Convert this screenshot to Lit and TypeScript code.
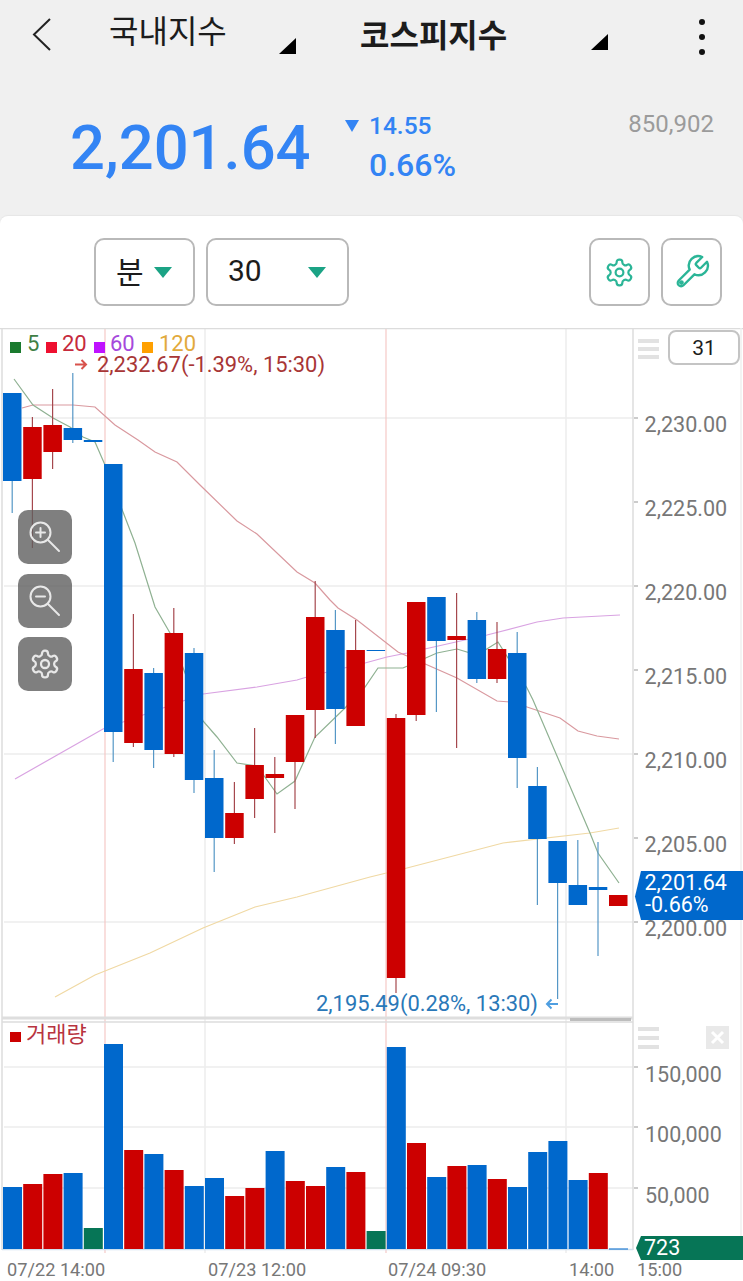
import { LitElement, html, css, svg } from 'lit';
import { customElement } from 'lit/decorators.js';

const RED = '#cc0000';
const BLUE = '#0068cc';
const GREEN = '#067556';

// Candle body and wick y pixels, left to right: [top, bottom, wickTop, wickBottom, up]
const CANDLES: [number, number, number, number, boolean][] = [
  [393, 481, 393, 513, false],
  [427, 479, 417, 548, true],
  [425, 452, 389, 469, true],
  [428, 440, 373, 443, false],
  [440, 442, 440, 442, false],
  [464, 732, 464, 762, false],
  [669, 743, 614, 747, true],
  [673, 750, 668, 768, false],
  [633, 754, 608, 757, true],
  [653, 780, 648, 793, false],
  [778, 838, 750, 872, false],
  [813, 838, 782, 844, true],
  [765, 799, 728, 818, true],
  [774, 778, 757, 833, true],
  [715, 762, 715, 809, true],
  [617, 710, 581, 738, true],
  [630, 709, 610, 744, false],
  [650, 726, 620, 726, true],
  [650, 651, 650, 651, false],
  [718, 978, 714, 993, true],
  [602, 715, 602, 721, true],
  [597, 641, 597, 712, false],
  [636, 640, 593, 748, true],
  [620, 679, 612, 683, false],
  [649, 679, 622, 683, true],
  [653, 758, 632, 788, false],
  [786, 839, 767, 905, false],
  [841, 883, 841, 999, false],
  [885, 905, 840, 905, false],
  [887, 890, 842, 956, false],
  [895, 906, 895, 906, true],
];

// Volume bar top y and colour, same order as the candles
const VOLUMES: [number, string][] = [
  [1187, BLUE], [1184, RED], [1174, RED], [1173, BLUE], [1228, GREEN], [1044, BLUE],
  [1150, RED], [1154, BLUE], [1170, RED], [1186, BLUE], [1178, BLUE], [1196, RED],
  [1188, RED], [1151, BLUE], [1181, RED], [1186, RED], [1167, BLUE], [1172, RED],
  [1231, GREEN], [1047, BLUE], [1143, RED], [1177, BLUE], [1166, RED], [1165, BLUE],
  [1179, RED], [1187, BLUE], [1152, BLUE], [1141, BLUE], [1180, BLUE], [1173, RED],
];

const MA5 = '14,379 33,405 53,418 70,427 83,437 95,442 105,465 123,512 135,543 155,607 170,633 203,721 217,737 237,763 257,766 277,794 295,781 315,737 345,708 365,687 378,668 403,668 437,653 457,649 477,655 498,642 527,688 533,700 590,833 598,853 619,883';
const MA20 = '22,408 33,405 73,405 95,407 115,425 138,440 155,452 177,462 200,485 237,521 257,534 297,572 315,583 330,600 338,608 357,620 398,652 457,678 497,701 510,702 527,707 560,718 578,731 597,736 619,739';
const MA60 = '15,779 103,729 203,694 257,687 297,680 307,677 365,663 387,657 407,653 487,635 537,622 563,618 620,615';
const MA120 = '55,997 95,975 150,953 203,928 255,907 297,897 370,877 407,868 503,843 590,833 619,828';

const PRICE_TICKS = [
  [418, '2,230.00'], [502, '2,225.00'], [586, '2,220.00'], [670, '2,215.00'],
  [754, '2,210.00'], [838, '2,205.00'], [922, '2,200.00'],
] as const;
const VOLUME_TICKS = [
  [1067, '150,000'], [1127, '100,000'], [1188, '50,000'],
] as const;
const DATES = [
  [7, '07/22 14:00'], [208, '07/23 12:00'], [388, '07/24 09:30'], [569, '14:00'], [637, '15:00'],
] as const;
const LEGEND = [
  [10, 27, '#1a7a2e', '#3f7f45', '5'],
  [46, 62, '#ee1030', '#c62a3c', '20'],
  [94, 110, '#bf12ff', '#a648dc', '60'],
  [142, 159, '#ffa000', '#e2aa3c', '120'],
] as const;

const barX = (i: number) => 3 + i * 20.2;

const gear = (color: string, size: number) => html`
  <svg width=${size} height=${size} viewBox="0 0 24 24" fill="none" stroke=${color} stroke-width="1.7" stroke-linejoin="round">
    <path d="M12.22 2h-.44a2 2 0 0 0-2 2v.18a2 2 0 0 1-1 1.73l-.43.25a2 2 0 0 1-2 0l-.15-.08a2 2 0 0 0-2.73.73l-.22.38a2 2 0 0 0 .73 2.73l.15.1a2 2 0 0 1 1 1.72v.51a2 2 0 0 1-1 1.74l-.15.09a2 2 0 0 0-.73 2.73l.22.38a2 2 0 0 0 2.73.73l.15-.08a2 2 0 0 1 2 0l.43.25a2 2 0 0 1 1 1.73V20a2 2 0 0 0 2 2h.44a2 2 0 0 0 2-2v-.18a2 2 0 0 1 1-1.73l.43-.25a2 2 0 0 1 2 0l.15.08a2 2 0 0 0 2.73-.73l.22-.39a2 2 0 0 0-.73-2.73l-.15-.08a2 2 0 0 1-1-1.74v-.5a2 2 0 0 1 1-1.74l.15-.09a2 2 0 0 0 .73-2.73l-.22-.38a2 2 0 0 0-2.73-.73l-.15.08a2 2 0 0 1-2 0l-.43-.25a2 2 0 0 1-1-1.73V4a2 2 0 0 0-2-2z"/>
    <circle cx="12" cy="12" r="3"/>
  </svg>
`;

const magnifier = (plus: boolean) => html`
  <svg width="54" height="54" viewBox="0 0 54 54" fill="none" stroke="#e8e8e8" stroke-width="2" stroke-linecap="round">
    <circle cx="22.5" cy="22.5" r="10"/>
    <path d="M30 30l11 11"/>
    <path d="M18 22.5h9"/>
    ${plus ? svg`<path d="M22.5 18v9"/>` : ''}
  </svg>
`;

@customElement('app-root')
export class AppRoot extends LitElement {
  static styles = css`
    :host {
      display: block;
      width: 743px;
      height: 1281px;
      overflow: hidden;
      background: #f0f0f0;
      font-family: Roboto, "Noto Sans CJK KR", sans-serif;
    }

    .header {
      display: flex;
      align-items: flex-start;
      height: 64px;
      box-sizing: border-box;
      color: #1c1c1c;
    }
    .back {
      width: 109px;
      flex: none;
      padding: 18px 0 0 32px;
      box-sizing: border-box;
    }
    .title {
      display: flex;
      justify-content: space-between;
      flex: none;
      font-family: "Noto Sans CJK KR", sans-serif;
      font-size: 32px;
      line-height: 40px;
    }
    .title.index {
      width: 187px;
      margin-right: 64px;
      padding-top: 9px;
    }
    .title.market {
      width: 248px;
      margin-right: 91px;
      padding-top: 13px;
      font-weight: 700;
    }
    .corner {
      width: 0;
      height: 0;
      border-style: solid;
      border-width: 0 0 16px 17px;
      border-color: transparent transparent #000 transparent;
    }
    .title.index .corner { margin-top: 29px; }
    .title.market .corner { margin-top: 21px; }
    .more {
      display: flex;
      flex-direction: column;
      gap: 9px;
      padding-top: 19px;
    }
    .more i {
      width: 6px;
      height: 6px;
      border-radius: 50%;
      background: #111;
    }

    .quote {
      display: flex;
      align-items: flex-start;
      height: 152px;
      box-sizing: border-box;
      padding: 49px 29px 0 70px;
      color: #3384f4;
    }
    .price {
      width: 275px;
      flex: none;
      margin-top: 4px;
      font-size: 61.5px;
      line-height: 63px;
      font-weight: 500;
    }
    .delta {
      display: flex;
      flex-direction: column;
      font-weight: 500;
    }
    .delta-top {
      display: flex;
      align-items: center;
      gap: 10px;
      font-size: 24.5px;
      line-height: 25px;
    }
    .delta-top i {
      width: 0;
      height: 0;
      border-style: solid;
      border-width: 12px 7px 0 7px;
      border-color: #3384f4 transparent transparent transparent;
    }
    .pct {
      margin: 11px 0 0 24px;
      font-size: 32px;
      line-height: 32px;
    }
    .volume {
      margin: -1px 0 0 auto;
      font-size: 24px;
      line-height: 24px;
      color: #9b9b9b;
    }

    .card {
      height: 1065px;
      background: #fff;
      border-radius: 8px 8px 0 0;
      box-shadow: 0 -1px 1px #e6e6e6;
    }
    .toolbar {
      display: flex;
      align-items: flex-start;
      gap: 11px;
      height: 112px;
      box-sizing: border-box;
      padding: 22px 21px 0 94px;
    }
    .btn {
      display: flex;
      align-items: center;
      justify-content: center;
      height: 68px;
      box-sizing: border-box;
      border: 2px solid #b9b9b9;
      border-radius: 10px;
      background: #fff;
      color: #1c1c1c;
      font-size: 30px;
    }
    .btn.select {
      justify-content: space-between;
      padding: 0 21px 4px 20px;
    }
    .btn.unit { width: 101px; font-family: "Noto Sans CJK KR", sans-serif; }
    .btn.period { width: 143px; }
    .btn.icon { width: 61px; }
    .btn.gear-btn { margin-left: auto; }
    .caret {
      width: 0;
      height: 0;
      margin-top: 4px;
      border-style: solid;
      border-width: 11px 9px 0 9px;
      border-color: #1ba385 transparent transparent transparent;
    }

    .chart {
      position: relative;
      height: 953px;
    }
    .chart svg.canvas {
      display: block;
    }
    .chart text {
      font-family: Roboto, "Noto Sans CJK KR", sans-serif;
    }
    .zoom-tools {
      position: absolute;
      left: 18px;
      top: 182px;
      display: flex;
      flex-direction: column;
      gap: 9.5px;
    }
    .tool {
      display: flex;
      align-items: center;
      justify-content: center;
      width: 54px;
      height: 54px;
      border-radius: 10px;
      background: rgba(95, 95, 95, 0.8);
    }
    .count {
      position: absolute;
      left: 668px;
      top: 2px;
      display: flex;
      align-items: center;
      justify-content: center;
      width: 72px;
      height: 35px;
      box-sizing: border-box;
      border: 2px solid #c4c4c4;
      border-radius: 8px;
      font-size: 21px;
      color: #1c1c1c;
      background: #fff;
    }
  `;

  private renderGrid() {
    return svg`
      <g stroke="#ececec" stroke-width="1.5">
        ${[418, 586, 754, 922, 1067, 1127, 1188].map(y => svg`<line x1="4" x2="633" y1=${y} y2=${y} />`)}
        <line x1="205" x2="205" y1="328" y2="1253" />
        <line x1="566" x2="566" y1="328" y2="1253" />
      </g>
      <g stroke="#f5c9c7" stroke-width="1.2">
        <line x1="105" x2="105" y1="328" y2="1253" />
        <line x1="386" x2="386" y1="328" y2="1253" />
      </g>
      <g stroke="#dcdcdc" stroke-width="1.5">
        <line x1="0" x2="743" y1="328.5" y2="328.5" />
        <line x1="2" x2="2" y1="328" y2="1250" />
        <line x1="633" x2="633" y1="328" y2="1250" />
        <line x1="741" x2="741" y1="328" y2="1250" stroke="#efefef" />
        <line x1="2" x2="633" y1="1022" y2="1022" />
        <line x1="2" x2="633" y1="1249.5" y2="1249.5" stroke="#cfe0ee" />
        ${[...PRICE_TICKS, ...VOLUME_TICKS].map(([y]) => svg`<line x1="634" x2="638" y1=${y} y2=${y} stroke="#bbb" />`)}
      </g>
      <line x1="2" x2="633" y1="1018" y2="1018" stroke="#dedede" stroke-width="3" />
      <line x1="570" x2="631" y1="1019.5" y2="1019.5" stroke="#bdbdbd" stroke-width="3" />
    `;
  }

  private renderAverages() {
    const lines: [string, string][] = [
      [MA120, '#f0d9a4'], [MA60, '#d9a3e2'], [MA20, '#d9999f'], [MA5, '#8fb192'],
    ];
    return lines.map(([points, color]) => svg`
      <polyline points=${points} fill="none" stroke=${color} stroke-width="1.2" />
    `);
  }

  private renderCandles() {
    return CANDLES.map(([top, bottom, wickTop, wickBottom, up], i) => {
      const x = barX(i);
      const mid = x + 9.2;
      return svg`
        <line x1=${mid} x2=${mid} y1=${wickTop} y2=${wickBottom} stroke=${up ? '#a5484e' : '#5597c6'} stroke-width="1.2" />
        <rect x=${x} y=${top} width="18.5" height=${bottom - top} fill=${up ? RED : BLUE} />
      `;
    });
  }

  private renderVolumes() {
    return VOLUMES.map(([top, color], i) => svg`
      <rect x=${barX(i)} y=${top} width="19" height=${1249 - top} fill=${color} />
    `);
  }

  private renderLabels() {
    return svg`
      ${LEGEND.map(([sx, tx, square, label, name]) => svg`
        <rect x=${sx} y="342" width="11" height="11" fill=${square} />
        <text x=${tx} y="351" font-size="22" fill=${label}>${name}</text>
      `)}
      <path d="M75 364.5h11M81.5 360l4.5 4.5-4.5 4.5" fill="none" stroke="#d8524c" stroke-width="2" />
      <text x="97" y="372" font-size="21.9" fill="#a83636">2,232.67(-1.39%, 15:30)</text>
      <text x="316" y="1011" font-size="21.9" fill="#2a78b8">2,195.49(0.28%, 13:30)</text>
      <path d="M558 1004h-11M551.5 999.5l-4.500 4.500 4.500 4.500" fill="none" stroke="#4f9ee0" stroke-width="2" />

      <g fill="#777">
        ${PRICE_TICKS.map(([y, label]) => svg`<text x="644.5" y=${y + 13.5} font-size="21.6">${label}</text>`)}
        ${VOLUME_TICKS.map(([y, label]) => svg`<text x="645" y=${y + 15} font-size="21.5">${label}</text>`)}
        ${DATES.map(([x, label]) => svg`<text x=${x} y="1276" font-size="18.2">${label}</text>`)}
      </g>

      <g fill="#e2e2e2">
        ${[339, 347, 355, 1027, 1036, 1045].map(y => svg`<rect x="638" y=${y} width="21" height="4" />`)}
      </g>
      <rect x="706" y="1026" width="23" height="23" fill="#e9e9e9" />
      <path d="M712 1032l11 11M723 1032l-11 11" stroke="#fff" stroke-width="3" />

      <path d="M635 896.500L641 871H743V920H641Z" fill=${BLUE} />
      <text x="644.5" y="890" font-size="21.500" fill="#fff">2,201.64</text>
      <text x="645" y="912" font-size="21.500" fill="#fff">-0.66%</text>

      <path d="M636 1248L641 1236H743V1260H641Z" fill=${GREEN} />
      <text x="644" y="1255" font-size="21.500" fill="#fff">723</text>
      <line x1="609" x2="628" y1="1249" y2="1249" stroke=${BLUE} stroke-width="1" />

      <rect x="10" y="1032" width="11" height="10" fill=${RED} />
      <text x="26" y="1042" font-size="22" fill="#b8343f" style="font-family:'Noto Sans CJK KR',sans-serif">거래량</text>
    `;
  }

  render() {
    return html`
      <div class="header">
        <div class="back">
          <svg width="20" height="34" viewBox="0 0 20 34" fill="none" stroke="#222" stroke-width="2">
            <path d="M18 1L2 16.500L18 32" />
          </svg>
        </div>
        <div class="title index"><span>국내지수</span><i class="corner"></i></div>
        <div class="title market"><span>코스피지수</span><i class="corner"></i></div>
        <div class="more"><i></i><i></i><i></i></div>
      </div>

      <div class="quote">
        <div class="price">2,201.64</div>
        <div class="delta">
          <div class="delta-top"><i></i><span>14.55</span></div>
          <div class="pct">0.66%</div>
        </div>
        <div class="volume">850,902</div>
      </div>

      <div class="card">
        <div class="toolbar">
          <div class="btn select unit"><span>분</span><i class="caret"></i></div>
          <div class="btn select period"><span>30</span><i class="caret"></i></div>
          <div class="btn icon gear-btn">${gear('#2bb597', 31)}</div>
          <div class="btn icon">
            <svg width="38" height="38" viewBox="0 0 24 24" fill="none" stroke="#2bb597" stroke-width="1.500" stroke-linejoin="round">
              <path d="M14.700 6.300a1 1 0 0 0 0 1.400l1.600 1.600a1 1 0 0 0 1.400 0l3.770-3.770a6 6 0 0 1-7.940 7.940l-6.910 6.910a2.120 2.120 0 0 1-3-3l6.910-6.910a6 6 0 0 1 7.940-7.940l-3.760 3.760z"/>
              <circle cx="5.300" cy="18.700" r="0.800"/>
            </svg>
          </div>
        </div>

        <div class="chart">
          <svg class="canvas" width="743" height="953" viewBox="0 328 743 953">
            ${this.renderGrid()}
            ${this.renderAverages()}
            ${this.renderCandles()}
            ${this.renderVolumes()}
            ${this.renderLabels()}
          </svg>
          <div class="zoom-tools">
            <div class="tool">${magnifier(true)}</div>
            <div class="tool">${magnifier(false)}</div>
            <div class="tool">${gear('#e8e8e8', 32)}</div>
          </div>
          <div class="count">31</div>
        </div>
      </div>
    `;
  }
}

declare global {
  interface HTMLElementTagNameMap {
    'app-root': AppRoot;
  }
}
